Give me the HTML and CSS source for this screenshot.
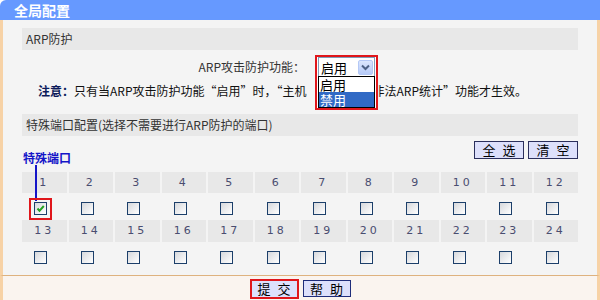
FILE: index.html
```html
<!DOCTYPE html>
<html>
<head>
<meta charset="utf-8">
<link rel="stylesheet" href="styles.css">
</head>
<body>
<div class="win">
  <div class="title">全局配置</div>
  <div class="main">
    <div class="bar">ARP防护</div>
    <div class="func-row">
      <span class="lbl">ARP攻击防护功能：</span>
      <span class="sel-cell">
        <span class="sel-hl">
          <span class="sel-box"><span class="sel-val">启用</span><span class="sel-btn"><svg width="9" height="7" viewBox="0 0 9 7"><path d="M1 1.5 L4.5 5 L8 1.5" fill="none" stroke="#4d6185" stroke-width="2"/></svg></span></span>
          <span class="sel-list"><span class="opt">启用</span><span class="opt on">禁用</span></span>
        </span>
      </span>
    </div>
    <p class="note"><b>注意：</b>只有当ARP攻击防护功能“启用”时，“主机<span class="gap"></span>非法ARP统计”功能才生效。</p>
    <div class="bar">特殊端口配置(选择不需要进行ARP防护的端口)</div>
    <div class="tools">
      <button class="tbtn">全 选</button><button class="tbtn">清 空</button>
      <span class="tag">特殊端口</span>
      <span class="tag-line"></span>
    </div>
    <div class="grid">
      <div class="num">1</div><div class="num">2</div><div class="num">3</div><div class="num">4</div><div class="num">5</div><div class="num">6</div><div class="num">7</div><div class="num">8</div><div class="num">9</div><div class="num">10</div><div class="num">11</div><div class="num">12</div>
      <div class="cb"><span class="hl"><span class="box"><svg width="11" height="11" viewBox="0 0 11 11"><path d="M2.5 5.5 L4.5 7.8 L8.8 3" fill="none" stroke="#21a121" stroke-width="2"/></svg></span></span></div>
      <div class="cb"><span class="box"></span></div><div class="cb"><span class="box"></span></div><div class="cb"><span class="box"></span></div><div class="cb"><span class="box"></span></div><div class="cb"><span class="box"></span></div><div class="cb"><span class="box"></span></div><div class="cb"><span class="box"></span></div><div class="cb"><span class="box"></span></div><div class="cb"><span class="box"></span></div><div class="cb"><span class="box"></span></div><div class="cb"><span class="box"></span></div>
      <div class="num">13</div><div class="num">14</div><div class="num">15</div><div class="num">16</div><div class="num">17</div><div class="num">18</div><div class="num">19</div><div class="num">20</div><div class="num">21</div><div class="num">22</div><div class="num">23</div><div class="num">24</div>
      <div class="cb"><span class="box"></span></div><div class="cb"><span class="box"></span></div><div class="cb"><span class="box"></span></div><div class="cb"><span class="box"></span></div><div class="cb"><span class="box"></span></div><div class="cb"><span class="box"></span></div><div class="cb"><span class="box"></span></div><div class="cb"><span class="box"></span></div><div class="cb"><span class="box"></span></div><div class="cb"><span class="box"></span></div><div class="cb"><span class="box"></span></div><div class="cb"><span class="box"></span></div>
    </div>
  </div>
  <div class="foot">
    <span class="btn-hl"><button class="fbtn">提 交</button></span><button class="fbtn">帮 助</button>
  </div>
</div>
</body>
</html>
```
FILE: styles.css
```css
html, body {
  margin: 0;
  padding: 0;
  background: #fff;
}
body {
  font-family: "Noto Sans CJK SC", "Liberation Sans", sans-serif;
  font-size: 12px;
  color: #222;
}
.win {
  width: 600px;
  height: 300px;
  display: flex;
  flex-direction: column;
  overflow: hidden;
}
.title {
  height: 20px;
  line-height: 20px;
  background: #6699ff;
  color: #fff;
  font-weight: bold;
  font-size: 14px;
  padding-left: 14px;
  border-top-left-radius: 6px;
}
.main {
  background: #f4f4f4;
  border-left: 3px solid #f7d2a6;
  border-right: 3px solid #f7d2a6;
  border-bottom: 1px solid #deb27f;
  padding: 8px 19px 0 19px;
  height: 247px;
  position: relative;
}
.bar {
  height: 22px;
  line-height: 22px;
  background: #e8e8e8;
  padding-left: 4px;
  color: #333;
}
.func-row {
  height: 33px;
  display: grid;
  grid-template-columns: 1fr 1fr;
  align-items: center;
}
.lbl {
  text-align: right;
  margin-right: -5px;
  color: #333;
  line-height: 16px;
  margin-top: 1px;
}
.sel-cell {
  position: relative;
  height: 33px;
}
.sel-hl {
  position: absolute;
  left: 15px;
  top: 5px;
  width: 59px;
  height: 51px;
  border: 2px solid #e0161b;
  background: #fff;
  display: flex;
  flex-direction: column;
  z-index: 2;
}
.sel-box {
  height: 19px;
  margin: 0 1px;
  border: 1px solid #7f9db9;
  border-bottom: none;
  display: flex;
  align-items: center;
  justify-content: space-between;
  background: #fff;
}
.sel-val {
  padding-left: 2px;
  font-size: 13px;
  line-height: 15px;
  color: #000;
}
.sel-btn {
  width: 15px;
  height: 15px;
  margin-right: 1px;
  border-radius: 2px;
  background: linear-gradient(#dbe6fd, #b7cbf8);
  border: 1px solid #b4c8f6;
  box-sizing: border-box;
  display: flex;
  align-items: center;
  justify-content: center;
}
.sel-list {
  margin: 0 1px;
  border: 1px solid #000;
  display: flex;
  flex-direction: column;
  flex: 1;
}
.opt {
  height: 15px;
  line-height: 15px;
  padding-left: 1px;
  font-size: 13px;
  color: #000;
}
.opt.on {
  background: #316ac5;
  color: #fff;
}
.note {
  margin: 0 0 15px 0;
  padding-left: 16px;
  line-height: 16px;
  color: #111;
}
.note b {
  color: #0b1a5a;
}
.gap {
  display: inline-block;
  width: 66px;
}
.tools {
  height: 36px;
  position: relative;
  display: flex;
  justify-content: flex-end;
  align-items: flex-start;
  padding-top: 5px;
  box-sizing: border-box;
  gap: 4px;
}
.tbtn, .fbtn {
  font-family: "Noto Sans CJK SC", sans-serif;
  font-size: 13px;
  height: 18px;
  width: 49px;
  padding: 0;
  margin: 0;
  line-height: 16px;
  word-spacing: 4px;
  background: #dde0fb;
  border: 1px solid #2b2f5c;
  color: #000;
}
.tbtn {
  width: 50px;
}
.tag {
  position: absolute;
  left: 1px;
  top: 14px;
  line-height: 16px;
  font-weight: bold;
  color: #1515c8;
  font-size: 12px;
}
.tag-line {
  position: absolute;
  left: 13px;
  top: 29px;
  width: 2px;
  height: 36px;
  background: #1515c8;
  z-index: 1;
}
.grid {
  display: grid;
  grid-template-columns: repeat(12, 1fr);
  grid-template-rows: 21px 27px 22px 27px;
  column-gap: 2px;
}
.num {
  background: #e8e8e8;
  text-align: center;
  line-height: 21px;
  letter-spacing: 3px;
  color: #4a4d70;
  font-family: "DejaVu Sans", sans-serif;
  font-size: 11px;
}
.cb {
  display: flex;
  justify-content: center;
  padding-top: 9px;
  padding-right: 7px;
}
.box {
  display: block;
  width: 13px;
  height: 13px;
  box-sizing: border-box;
  border: 1px solid #1c3f6a;
  background: linear-gradient(135deg, #d6d8dc, #ffffff);
  position: relative;
}
.box svg {
  display: block;
}
.hl {
  display: block;
  border: 2px solid #e0161b;
  padding: 2px 3px;
  margin-top: -4px;
  position: relative;
  z-index: 2;
}
.foot {
  flex: 1;
  background: #faf4ef;
  border-left: 3px solid #f7d2a6;
  border-right: 3px solid #f7d2a6;
  display: flex;
  justify-content: center;
  align-items: flex-start;
  padding-top: 4px;
  gap: 4px;
}
.btn-hl {
  border: 2px solid #e0161b;
  display: flex;
  margin-top: -1px;
}
.fbtn {
  width: 48px;
  height: 17px;
  border-color: #1f2d7a;
}
.btn-hl .fbtn {
  border: none;
  width: 45px;
  height: 16px;
}
```
